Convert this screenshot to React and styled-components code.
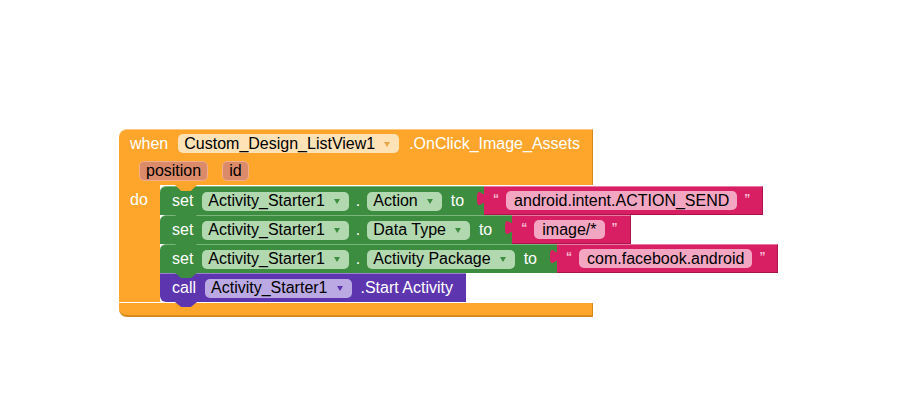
import styled, { createGlobalStyle } from "styled-components";

const Global = createGlobalStyle`
  body {
    margin: 0;
    background: #ffffff;
    font-family: "Liberation Sans", Arial, sans-serif;
  }
`;

const COLORS = {
  orange: { base: "#fda62b", light: "#fec880", dark: "#d8891c", field: "#ffe2b6", arrow: "#eaa64a" },
  green: { base: "#3d8d40", light: "#7ab67c", dark: "#2d6e30", field: "#b2d8b0", arrow: "#3d8d40" },
  pink: { base: "#d91f63", light: "#ea7aa3", dark: "#a8164b", field: "#f3a6c2", arrow: "#d91f63" },
  purple: { base: "#5d35ae", light: "#9a80d0", dark: "#47268c", field: "#bba9e3", arrow: "#5d35ae" },
};

const App = () => {
  return (
    <>
      <Global />
      <Workspace>
        <EventBlock>
          <HatRow>
            <Label>when</Label>
            <Dropdown tone="orange">Custom_Design_ListView1</Dropdown>
            <Label>.OnClick_Image_Assets</Label>
          </HatRow>
          <ParamRow>
            <Param>position</Param>
            <Param>id</Param>
          </ParamRow>
          <DoRow>
            <DoLabel>do</DoLabel>
            <Stack>
              <SetStatement prop="Action" value="android.intent.ACTION_SEND" />
              <SetStatement prop="Data Type" value="image/*" />
              <SetStatement prop="Activity Package" value="com.facebook.android" />
              <Statement tone="purple">
                <Label>call</Label>
                <Dropdown tone="purple">Activity_Starter1</Dropdown>
                <Label>.Start Activity</Label>
              </Statement>
            </Stack>
          </DoRow>
          <BottomArm />
        </EventBlock>
      </Workspace>
    </>
  );
};

const SetStatement = ({ prop, value }) => (
  <Statement tone="green">
    <Label>set</Label>
    <Dropdown tone="green">Activity_Starter1</Dropdown>
    <Dot>.</Dot>
    <Dropdown tone="green">{prop}</Dropdown>
    <Label>to</Label>
    <TextBlock>
      <Tab viewBox="0 0 9 16">
        <path d="M9,0 c 0,10 -8,-8 -8,7.5 s 8,-2.5 8,7.5 Z" />
      </Tab>
      <Quote>“</Quote>
      <TextField>{value}</TextField>
      <Quote>”</Quote>
    </TextBlock>
  </Statement>
);

export default App;

const Workspace = styled.div`
  width: 898px;
  height: 394px;
  padding: 129px 0 0 119px;
  box-sizing: border-box;
  overflow: hidden;
`;

const EventBlock = styled.div`
  width: 474px;
  display: flex;
  flex-direction: column;
  font-size: 16px;
`;

const HatRow = styled.div`
  display: flex;
  align-items: center;
  gap: 10px;
  height: 28px;
  padding: 0 11px;
  background: ${COLORS.orange.base};
  border-top: 1px solid ${COLORS.orange.light};
  border-right: 1px solid ${COLORS.orange.dark};
  border-radius: 8px 0 0 0;
  box-sizing: border-box;
`;

const ParamRow = styled.div`
  display: flex;
  align-items: center;
  gap: 14px;
  height: 28px;
  padding: 0 20px;
  background: ${COLORS.orange.base};
  border-right: 1px solid ${COLORS.orange.dark};
  box-sizing: border-box;
`;

const Label = styled.span`
  color: #ffffff;
  white-space: nowrap;
  line-height: 1;
`;

const Dot = styled(Label)`
  margin: 0 -2px;
`;

const Dropdown = styled.span`
  display: inline-flex;
  align-items: center;
  height: 19px;
  padding: 0 9px 0 6px;
  border-radius: 5px;
  background: ${(p) => COLORS[p.tone].field};
  color: #000000;
  white-space: nowrap;
  box-sizing: border-box;

  &::after {
    content: "";
    margin-left: 9px;
    margin-top: 1px;
    border-left: 3.5px solid transparent;
    border-right: 3.5px solid transparent;
    border-top: 5px solid ${(p) => COLORS[p.tone].arrow};
  }
`;

const Param = styled.span`
  display: inline-flex;
  align-items: center;
  height: 20px;
  padding: 0 6px;
  border-radius: 5px;
  background: #dc8b6a;
  border: 1px solid #efae8d;
  color: #000000;
  box-sizing: border-box;
`;

const DoRow = styled.div`
  display: flex;
  align-items: stretch;
`;

const DoLabel = styled.div`
  width: 41px;
  flex: none;
  padding: 6px 0 0 11px;
  box-sizing: border-box;
  color: #ffffff;
  background: ${COLORS.orange.base};
`;

const Stack = styled.div`
  position: relative;
  display: flex;
  flex-direction: column;
  align-items: flex-start;
  padding-top: 1px;
  min-width: 0;

  &::before {
    content: "";
    position: absolute;
    left: 15px;
    top: 0;
    width: 22px;
    height: 6px;
    background: ${COLORS.orange.base};
    clip-path: polygon(0 0, 100% 0, 72% 100%, 28% 100%);
    z-index: 3;
  }
`;

const Statement = styled.div`
  position: relative;
  display: flex;
  align-items: center;
  gap: 9px;
  height: 29px;
  padding-left: 12px;
  padding-right: ${(p) => (p.tone === "purple" ? "13px" : "0")};
  background: ${(p) => COLORS[p.tone].base};
  border-top: 1px solid ${(p) => COLORS[p.tone].light};
  border-radius: ${(p) => (p.tone === "purple" ? "0 0 0 6px" : "6px 0 0 0")};
  box-sizing: border-box;
  white-space: nowrap;

  &::after {
    content: "";
    position: absolute;
    left: 15px;
    top: 100%;
    width: 22px;
    height: 5px;
    background: ${(p) => COLORS[p.tone].base};
    clip-path: polygon(0 0, 100% 0, 72% 100%, 28% 100%);
    z-index: 2;
  }
`;

const TextBlock = styled.div`
  position: relative;
  align-self: stretch;
  display: flex;
  align-items: center;
  gap: 7px;
  margin: -1px 0 0 11px;
  padding: 0 12px 0 9px;
  background: ${COLORS.pink.base};
  border-right: 1px solid ${COLORS.pink.dark};
  border-bottom: 1px solid ${COLORS.pink.dark};
  border-top: 1px solid ${COLORS.pink.light};
`;

const Tab = styled.svg`
  position: absolute;
  left: -8px;
  top: 4px;
  width: 9px;
  height: 16px;
  fill: ${COLORS.pink.base};
`;

const Quote = styled.span`
  color: #f6c3d6;
  font-size: 12px;
  font-weight: bold;
  align-self: flex-start;
  margin-top: 5px;
`;

const TextField = styled.span`
  display: inline-flex;
  align-items: center;
  height: 19px;
  padding: 0 8px;
  border-radius: 5px;
  background: ${COLORS.pink.field};
  color: #000000;
`;

const BottomArm = styled.div`
  height: 14px;
  margin-top: 1px;
  background: ${COLORS.orange.base};
  border-right: 1px solid ${COLORS.orange.dark};
  border-bottom: 2px solid ${COLORS.orange.dark};
  border-radius: 0 0 0 8px;
  box-sizing: border-box;
`;
